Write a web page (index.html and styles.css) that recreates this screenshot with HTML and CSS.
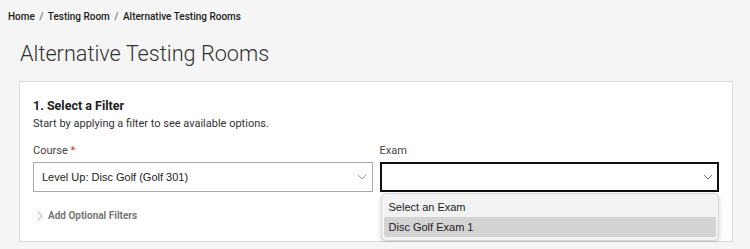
FILE: index.html
```html
<!DOCTYPE html>
<html><head>
<title>Alternative Testing Rooms</title>
<link rel="stylesheet" href="styles.css">
<meta charset="UTF-8">
</head>
<body>

<div class="crumbs">
  <a href="#">Home</a> <span class="sep">/</span>
  <a href="#">Testing Room</a> <span class="sep">/</span>
  <span>Alternative Testing Rooms</span>
</div>

<h1>Alternative Testing Rooms</h1>

<div class="card">
  <h2>1. Select a Filter</h2>
  <p class="hint">Start by applying a filter to see available options.</p>

  <div class="fields">
    <div class="field">
      <label>Course <span class="req">*</span></label>
      <div class="select">
        <span>Level Up: Disc Golf (Golf 301)</span>
        <svg class="caret" width="10" height="6" viewBox="0 0 10 6"><path d="M1 1l4 4 4-4" fill="none" stroke="#999" stroke-width="1"/></svg>
      </div>
    </div>
    <div class="field">
      <label>Exam</label>
      <div class="select open">
        <span></span>
        <svg class="caret" width="10" height="6" viewBox="0 0 10 6"><path d="M1 1l4 4 4-4" fill="none" stroke="#777" stroke-width="1"/></svg>
        <ul class="menu">
          <li>Select an Exam</li>
          <li class="hl">Disc Golf Exam 1</li>
        </ul>
      </div>
    </div>
  </div>

  <div class="more">
    <svg width="6" height="10" viewBox="0 0 6 10"><path d="M1 1l4 4-4 4" fill="none" stroke="#aaa" stroke-width="1"/></svg>
    <span>Add Optional Filters</span>
  </div>
</div>

</body></html>
```

FILE: styles.css
```css
body {
    margin: 0;
    background: #f5f5f5;
    font-family: Roboto, "Liberation Sans", sans-serif;
    color: #333;
    padding: 0 17px 0 0;
}

a { color: #222; text-decoration: none }

.crumbs {
  font-size: 10px;
  font-weight: 500;
  padding: 11px 8px 0;
  color: #222;
}
.crumbs .sep { margin: 0 2px; color: #555; font-weight: 400; }

h1 {
  font-weight: 300;
  font-size: 21.7px;
  margin: 19px 0 0 20px;
  color: #333;
}

.card {
  background: white;
  border: 1px solid #dcdcdc;
  margin: 15px 0 0 19px;
  padding: 16px 13px 18px;
  height: 125px;
}

.card h2 { font-size: 12.5px; margin: 0; font-weight: bold; color: #222; }
.card .hint { font-size: 11px; margin: 4px 0 0; color: #333; }

.fields { display: flex; gap: 7px; margin-top: 14px; }
.field { flex: 1; }
.field label { display: block; font-size: 11px; color: #444; margin-bottom: 5px; }
.req { color: #d23c1e; }

.select {
  position: relative;
  height: 28px;
  border: 1px solid #aaa;
  display: flex;
  align-items: center;
  justify-content: space-between;
  padding: 0 5px 0 8px;
  font-family: "Liberation Sans", Arial, sans-serif;
  font-size: 11px;
  color: #222;
}
.select.open { border: 2px solid #111; height: 26px; padding: 0 4px 0 7px; }

.menu {
  position: absolute;
  left: -1px;
  right: -2px;
  top: 29px;
  margin: 0;
  padding: 3px 2px;
  list-style: none;
  background: #f2f2f2;
  border: 1px solid #d8d8d8;
  border-radius: 5px;
  box-shadow: 0 2px 5px rgba(0,0,0,0.18);
  font-size: 11px;
}
.menu li { padding: 0 5px; height: 20px; line-height: 20px; border-radius: 2px; }
.menu li.hl { background: #d3d3d3; }

.more {
  display: flex;
  align-items: center;
  gap: 5px;
  margin: 18px 0 0 4px;
  font-size: 10px;
  font-weight: bold;
  color: #777;
}
```
